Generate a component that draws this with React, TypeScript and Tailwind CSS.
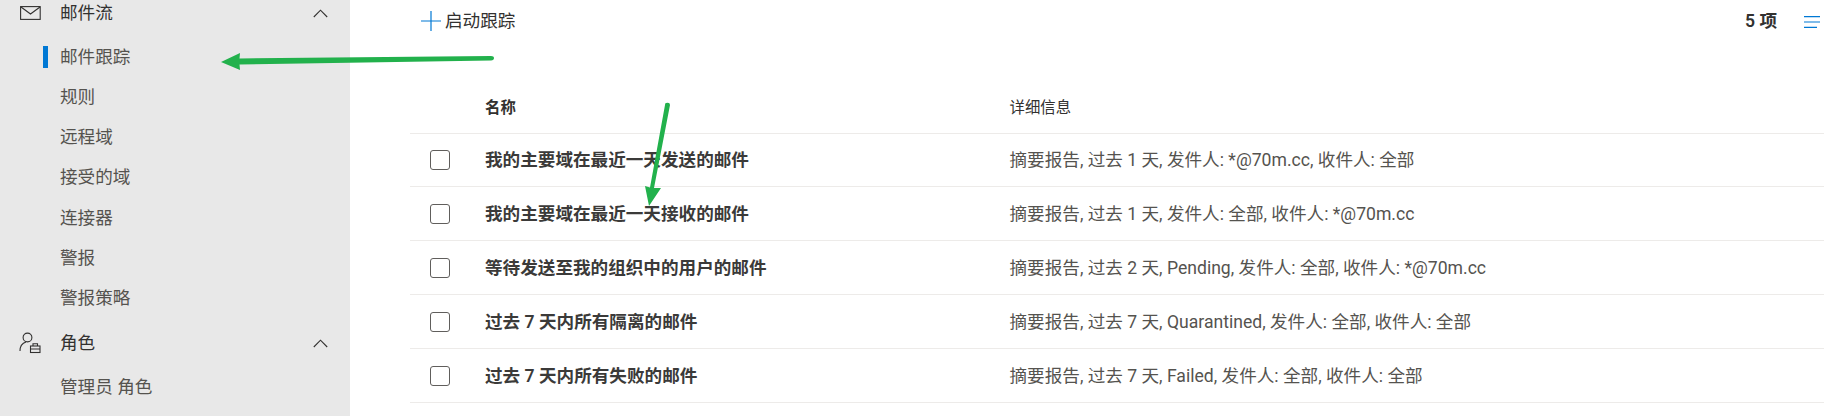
const font = { fontFamily: 'Roboto, "Noto Sans CJK SC", sans-serif' };

function MailIcon() {
  return (
    <svg width="21" height="14" viewBox="0 0 21 14" fill="none" stroke="#323130" strokeWidth="1.1">
      <rect x="0.6" y="0.6" width="19.6" height="12.8" />
      <path d="M1 1l9.5 7L20 1" />
    </svg>
  );
}

function RoleIcon() {
  return (
    <svg width="22" height="22" viewBox="0 0 22 22" fill="none" stroke="#323130" strokeWidth="1.1">
      <circle cx="8.500" cy="5.500" r="4.400" />
      <path d="M1 19c0-4.500 2.500-8 6-9" />
      <rect x="11.500" y="14" width="9.500" height="6.500" />
      <path d="M14 14v-2.200h4.500V14M11.500 17h9.500" />
    </svg>
  );
}

function Chevron() {
  return (
    <svg width="15" height="9" viewBox="0 0 15 9" fill="none" stroke="#323130" strokeWidth="1.1">
      <path d="M0.800 8L7.500 1.200L14.200 8" />
    </svg>
  );
}

function NavGroup({ icon, label }: { icon: React.ReactNode; label: string }) {
  return (
    <div className="flex items-center h-[40px] text-[#323130]">
      <div className="w-[60px] flex justify-center shrink-0">{icon}</div>
      <span className="flex-1">{label}</span>
      <div className="w-[37px] shrink-0"><Chevron /></div>
    </div>
  );
}

function NavItem({ label, active }: { label: string; active?: boolean }) {
  return (
    <div className="flex items-center h-[40.2px] text-[#55534f] pl-[60px] relative">
      {active && <span className="absolute left-[43px] top-[9px] h-[22px] w-[5px] bg-[#0078d4]" />}
      {label}
    </div>
  );
}

const rows = [
  ["我的主要域在最近一天发送的邮件", "摘要报告, 过去 1 天, 发件人: *@70m.cc, 收件人: 全部"],
  ["我的主要域在最近一天接收的邮件", "摘要报告, 过去 1 天, 发件人: 全部, 收件人: *@70m.cc"],
  ["等待发送至我的组织中的用户的邮件", "摘要报告, 过去 2 天, Pending, 发件人: 全部, 收件人: *@70m.cc"],
  ["过去 7 天内所有隔离的邮件", "摘要报告, 过去 7 天, Quarantined, 发件人: 全部, 收件人: 全部"],
  ["过去 7 天内所有失败的邮件", "摘要报告, 过去 7 天, Failed, 发件人: 全部, 收件人: 全部"],
];

export default function App() {
  return (
    <div className="relative flex h-[416px] w-[1824px] overflow-hidden bg-white text-[17.6px]" style={font}>
      <aside className="w-[350px] shrink-0 bg-[#e8e8e8] -mt-[7px]">
        <NavGroup icon={<MailIcon />} label="邮件流" />
        <div className="pt-[4px]">
          <NavItem label="邮件跟踪" active />
          <NavItem label="规则" />
          <NavItem label="远程域" />
          <NavItem label="接受的域" />
          <NavItem label="连接器" />
          <NavItem label="警报" />
          <NavItem label="警报策略" />
        </div>
        <div className="pt-[5px]">
          <NavGroup icon={<RoleIcon />} label="角色" />
        </div>
        <div className="pt-[4px]">
          <NavItem label="管理员 角色" />
        </div>
      </aside>
      <main className="flex-1 min-w-0 pl-[60px]">
        <div className="flex items-center h-[43px] text-[#323130]">
          <div className="flex items-center gap-[4px] pl-[11px]">
            <svg width="20" height="20" viewBox="0 0 20 20" stroke="#0078d4" strokeWidth="1.2">
              <path d="M10 0v20M0 10h20" />
            </svg>
            <span>启动跟踪</span>
          </div>
          <span className="ml-auto font-semibold">5 项</span>
          <svg className="ml-[27px] mr-[4px]" width="16" height="12" viewBox="0 0 16 12" stroke="#0078d4" strokeWidth="1.1">
            <path d="M0 .6h16M0 6h16M0 11.400h13" />
          </svg>
        </div>
        <div className="flex items-center h-[90.500px] pt-[42px] text-[15.4px] text-[#323130] border-b border-[#edebe9]">
          <div className="w-[75px] shrink-0" />
          <div className="w-[528px] shrink-0 font-semibold -mr-[3.500px]">名称</div>
          <div>详细信息</div>
        </div>
        {rows.map(([name, detail]) => (
          <div key={name} className="flex items-center h-[53.900px] border-b border-[#edebe9]">
            <div className="w-[75px] shrink-0 pl-[20px]">
              <div className="h-[20px] w-[20px] rounded-[3px] border border-[#605e5c]" />
            </div>
            <div className="w-[524.500px] shrink-0 font-semibold text-[#3b3a39] pt-[1px]">{name}</div>
            <div className="text-[#55534f] pt-[1px]">{detail}</div>
          </div>
        ))}
      </main>
      <svg className="absolute left-0 top-0 pointer-events-none" width="1824" height="416" fill="#22b14c">
        <path d="M240 53L221 62L240 70L239.500 64.500L491 60.500Q494 60 494 58Q494 56 491 56L239.500 58.500Z" />
        <path d="M666 103Q670 102 670 105L654 188L661 188L649 206L645 186L650 187.500L665 105Q665 103 666 103Z" />
      </svg>
    </div>
  );
}
